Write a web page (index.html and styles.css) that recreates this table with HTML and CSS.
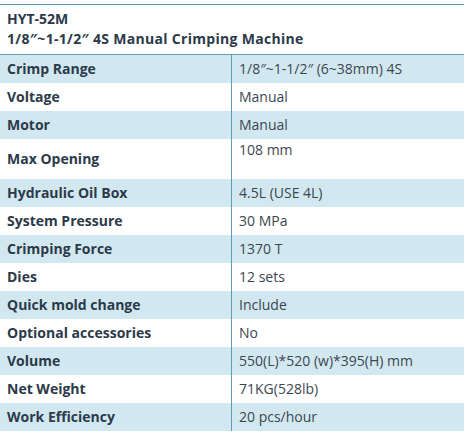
FILE: index.html
```html
<!DOCTYPE html>
<html>
<head>
<meta charset="utf-8">
<link rel="stylesheet" href="styles.css">
</head>
<body>
<div class="spec">
  <div class="head">
    <div>HYT-52M</div>
    <div class="title">1/8″~1-1/2″ 4S Manual Crimping Machine</div>
  </div>
  <div class="row alt"><div class="k">Crimp Range</div><div class="v">1/8″~1-1/2″ (6~38mm) 4S</div></div>
  <div class="row"><div class="k">Voltage</div><div class="v">Manual</div></div>
  <div class="row alt"><div class="k">Motor</div><div class="v">Manual</div></div>
  <div class="row tall"><div class="k">Max Opening</div><div class="v top">108 mm</div></div>
  <div class="row alt"><div class="k">Hydraulic Oil Box</div><div class="v">4.5L (USE 4L)</div></div>
  <div class="row"><div class="k">System Pressure</div><div class="v">30 MPa</div></div>
  <div class="row alt"><div class="k">Crimping Force</div><div class="v">1370 T</div></div>
  <div class="row"><div class="k">Dies</div><div class="v">12 sets</div></div>
  <div class="row alt"><div class="k">Quick mold change</div><div class="v">Include</div></div>
  <div class="row"><div class="k">Optional accessories</div><div class="v">No</div></div>
  <div class="row alt"><div class="k">Volume</div><div class="v">550(L)*520 (w)*395(H) mm</div></div>
  <div class="row"><div class="k">Net Weight</div><div class="v">71KG(528lb)</div></div>
  <div class="row alt"><div class="k">Work Efficiency</div><div class="v">20 pcs/hour</div></div>
</div>
</body>
</html>
```
FILE: styles.css
```css
html, body {
  margin: 0;
  padding: 0;
  background: #fff;
}
body {
  font-family: "Open Sans", "Noto Sans", sans-serif;
  font-size: 14px;
  color: #3c4650;
}
.spec {
  width: 464px;
  margin-top: 4px;
  border-top: 1px solid #5f9cb6;
}
.head {
  padding: 4px 7px 5px;
  line-height: 20px;
  font-weight: 700;
  color: #2c3a4a;
  border-bottom: 1px solid #5f9cb6;
}
.title {
  letter-spacing: 0.3px;
}
.row {
  display: grid;
  grid-template-columns: 231px 1fr;
  min-height: 28px;
  line-height: 20px;
}
.row.alt {
  background: #d2e8f1;
}
.row.tall {
  min-height: 40px;
}
.k {
  display: flex;
  align-items: center;
  padding: 0 7px;
  font-weight: 700;
  color: #2c3a4a;
}
.v {
  display: flex;
  align-items: center;
  padding: 0 7px;
  border-left: 1px solid #5f9cb6;
}
.v.top {
  align-items: flex-start;
  padding-top: 1px;
}
```
